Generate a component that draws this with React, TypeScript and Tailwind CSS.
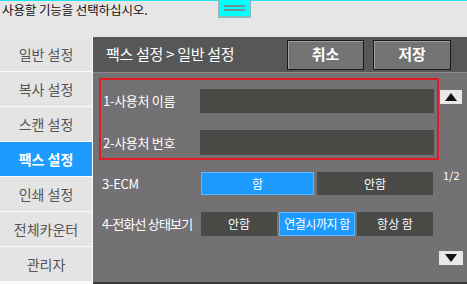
import React from "react";

const font = { fontFamily: '"Noto Sans CJK KR", "Noto Sans", sans-serif' };

function Tri({ up }: { up?: boolean }) {
  return (
    <svg width="12" height="8" viewBox="0 0 12 8">
      {up ? <polygon points="6,0 12,8 0,8" fill="#111" /> : <polygon points="0,0 12,0 6,8" fill="#111" />}
    </svg>
  );
}

export default function App() {
  const menu = ["일반 설정", "복사 설정", "스캔 설정", "팩스 설정", "인쇄 설정", "전체카운터", "관리자"];
  return (
    <div className="w-[467px] h-[284px] flex flex-col overflow-hidden bg-[#e6e6e6]" style={font}>
      {/* top bar */}
      <div className="relative h-[37px] shrink-0 bg-[#e6e6e6] border-t border-[#22e6ee]">
        <div className="pl-[2px] pt-[1px] text-[12.5px] leading-[16px] text-[#111] tracking-[-0.1px]">사용할 기능을 선택하십시오.</div>
        <div className="absolute left-[218px] top-[-1px] w-[33px] h-[18px] bg-[#00ffff] border-b-2 border-r border-l border-[#8fb8bb] flex flex-col items-center justify-center gap-[2px]">
          <div className="w-[21px] h-[2px] bg-[#6f8f96]" />
          <div className="w-[21px] h-[2px] bg-[#6f8f96]" />
        </div>
      </div>
      {/* body */}
      <div className="flex flex-1 min-h-0">
        <div className="w-[93px] shrink-0 flex flex-col gap-px bg-[#fafafa] pr-[1px]">
          {menu.map((m) => (
            <div
              key={m}
              className={
                m === "팩스 설정"
                  ? "h-[34px] shrink-0 flex items-center justify-center bg-[#1e9bff] text-white font-bold text-[14px]"
                  : "h-[34px] shrink-0 flex items-center justify-center bg-[#e4e4e4] text-[#555555] text-[14px]"
              }
            >
              {m}
            </div>
          ))}
        </div>
        <div className="flex-1 flex flex-col bg-[#737173] border-b-2 border-[#3c3c3c]">
          {/* header */}
          <div className="h-[35px] shrink-0 bg-[#575757] flex items-center pl-[13px] pr-[16px]">
            <div className="flex-1 text-white text-[15px] tracking-[-0.3px]">팩스 설정 &gt; 일반 설정</div>
            <div className="flex gap-[9px]">
              <div className="w-[77px] h-[30px] flex items-center justify-center bg-[#737373] border border-[#1a1a1a] shadow-[inset_1px_1px_0_#a0a0a0] text-white font-bold text-[15px]">취소</div>
              <div className="w-[78px] h-[30px] flex items-center justify-center bg-[#737373] border border-[#1a1a1a] shadow-[inset_1px_1px_0_#a0a0a0] text-white font-bold text-[15px]">저장</div>
            </div>
          </div>
          <div className="h-px shrink-0 bg-[#8c8a8c]" />
          {/* content */}
          <div className="flex-1 flex">
            <div className="w-[346px] pl-[6px] pt-[5px]">
              <div className="w-[340px] h-[82px] border-2 border-[#e31b23] pt-[9px] flex flex-col gap-[17px]">
                <div className="flex items-center pl-[2px]">
                  <div className="w-[97px] text-white text-[13px] tracking-[-0.3px]">1-사용처 이름</div>
                  <div className="w-[234px] h-[24px] bg-[#4a4b47]" />
                </div>
                <div className="flex items-center pl-[2px]">
                  <div className="w-[97px] text-white text-[13px] tracking-[-0.3px]">2-사용처 번호</div>
                  <div className="w-[234px] h-[25px] bg-[#4a4b47]" />
                </div>
              </div>
              <div className="mt-[12px] flex items-center pl-[3px]">
                <div className="w-[99px] text-white text-[13px] tracking-[-0.3px]">3-ECM</div>
                <div className="flex gap-[3px]">
                  <div className="w-[113px] h-[23px] flex items-center justify-center bg-[#1e9bff] border border-[#5cb8ff] text-white text-[12px]">함</div>
                  <div className="w-[116px] h-[23px] flex items-center justify-center bg-[#4a4b47] text-white text-[12px]">안함</div>
                </div>
              </div>
              <div className="mt-[17px] flex items-center pl-[3px]">
                <div className="w-[99px] text-white text-[13px] tracking-[-0.8px] whitespace-nowrap">4-전화선 상태보기</div>
                <div className="flex gap-[2px]">
                  <div className="w-[76px] h-[24px] flex items-center justify-center bg-[#4a4b47] text-white text-[12px]">안함</div>
                  <div className="w-[76px] h-[24px] flex items-center justify-center bg-[#1e9bff] border border-[#5cb8ff] text-white text-[12px] tracking-[-0.5px] whitespace-nowrap">연결시까지 함</div>
                  <div className="w-[76px] h-[24px] flex items-center justify-center bg-[#4a4b47] text-white text-[12px]">항상 함</div>
                </div>
              </div>
            </div>
            <div className="flex-1 flex flex-col">
              <div className="mt-[17px] ml-[1px] w-[22px] h-[14px] bg-[#e8e8e8] flex items-center justify-center"><Tri up /></div>
              <div className="mt-[64px] pl-[4px] text-white text-[11px] leading-[14px]">1/2</div>
              <div className="mt-[69px] w-[24px] h-[14px] bg-[#e8e8e8] flex items-center justify-center"><Tri /></div>
            </div>
          </div>
        </div>
      </div>
    </div>
  );
}
